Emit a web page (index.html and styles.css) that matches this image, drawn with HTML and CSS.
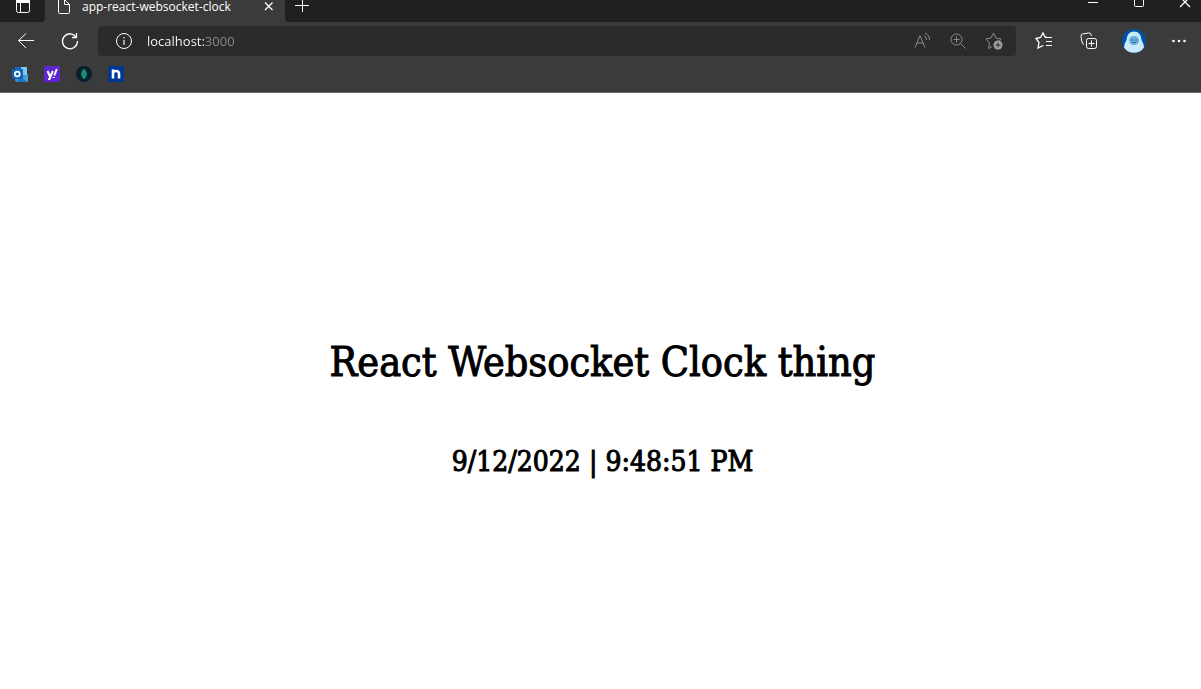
FILE: index.html
```html
<!DOCTYPE html>
<html lang="en">
<head>
<meta charset="utf-8">
<meta name="viewport" content="width=device-width, initial-scale=1">
<title>app-react-websocket-clock</title>
<link rel="stylesheet" href="styles.css">
</head>
<body>
<header class="browser">
  <div class="tabs">
    <button class="tab-menu" aria-label="Tab actions">
      <svg class="icon" width="16" height="16" viewBox="0 0 16 16"><path d="M1.500 0v10.500q0 2 2 2h9q2 0 2-2V0M5.500 3v9"/><path d="M1.500 1.500h13" stroke-width="3"/></svg>
    </button>
    <div class="tab">
      <svg class="icon" width="16" height="16" viewBox="0 0 16 16"><path d="M2.500 0v12.500q0 1 1 1h9q1 0 1-1V4.500L9 0M8.500 0v4.500h5"/></svg>
      <span class="tab-title">app-react-websocket-clock</span>
      <button class="tab-close" aria-label="Close tab">
        <svg class="icon" width="16" height="16" viewBox="0 0 16 16"><path d="M4 3.500l7.500 7.500M11.500 3.500L4 11" stroke-width="1.300"/></svg>
      </button>
    </div>
    <div class="strip">
      <button class="new-tab" aria-label="New tab">
        <svg class="icon" width="16" height="16" viewBox="0 0 16 16"><path d="M1 6.500h14M8.500 0v13"/></svg>
      </button>
      <div class="window-controls">
        <button aria-label="Minimize"><svg class="icon" width="16" height="16" viewBox="0 0 16 16"><path d="M3 6.500h10"/></svg></button>
        <button aria-label="Maximize"><svg class="icon" width="16" height="16" viewBox="0 0 16 16"><rect x="3.500" y="1.500" width="9" height="9" rx="1"/></svg></button>
        <button aria-label="Close"><svg class="icon" width="16" height="16" viewBox="0 0 16 16"><path d="M3 1l10 10M13 1L3 11" stroke-width="1.300"/></svg></button>
      </div>
    </div>
  </div>
  <div class="toolbar">
    <button class="tool" aria-label="Back"><svg class="icon" width="20" height="20" viewBox="0 0 20 20"><path d="M18 9.500H2.500M10 2.500l-7.500 7L10 17"/></svg></button>
    <button class="tool" aria-label="Refresh"><svg class="icon" width="20" height="20" viewBox="0 0 20 20"><path d="M16.500 6.500A7.500 7.500 0 1 0 17.500 10M16.500 2v4.500H12" stroke-width="1.300"/></svg></button>
    <div class="address">
      <button class="info" aria-label="Site information"><svg class="icon" width="18" height="18" viewBox="0 0 18 18"><circle cx="9" cy="9" r="7.500"/><path class="info-mark" d="M9 8v5M9 5v1.500"/></svg></button>
      <input class="url" type="text" aria-label="Address" value="localhost:3000">
      <div class="address-actions">
        <button aria-label="Read aloud"><svg class="icon" width="20" height="20" viewBox="0 0 20 20"><path d="M3 16.500L8 4.500l5 12M5 12h6M12 4.500q2.500 1 2.500 4.500M13 2q4.500 2 4.500 7"/></svg></button>
        <button aria-label="Zoom"><svg class="icon" width="20" height="20" viewBox="0 0 20 20"><circle cx="8.500" cy="8.500" r="5.500"/><path d="M12.500 12.500l5 5M8.500 5.500v6M5.500 8.500h6"/></svg></button>
        <button aria-label="Add to favorites"><svg class="icon" width="20" height="20" viewBox="0 0 20 20"><path d="M8 15.500l-3.500 2 1-5.500-3.500-4 5-1 2.500-5 2.500 5 5 1-2 2.500"/><circle class="plus-disc" cx="14" cy="14" r="4.500"/><path class="plus-mark" d="M11.500 14h5M14 11.500v5"/></svg></button>
      </div>
    </div>
    <div class="tools-end">
      <button class="tool" aria-label="Favorites"><svg class="icon" width="20" height="20" viewBox="0 0 20 20"><path d="M13 6.500l-2-.5-2-4L6.500 6.500 2 7.500l3 4-1 5.500 4-2 1.500-.500" stroke-width="1.300"/><path d="M12 6.500h6M12 10.500h6M12 14.500h6"/></svg></button>
      <button class="tool" aria-label="Collections"><svg class="icon" width="20" height="20" viewBox="0 0 20 20"><path d="M5 13.500q-1.500-.5-2-2.500l-1-5.500q-.5-2 1.500-2.500l6-1q2-.5 2.500 1.500l.5 1.500"/><rect x="7.500" y="7.500" width="10" height="10" rx="2"/><path d="M12.500 9.500v6M9.500 12.500h6"/></svg></button>
      <button class="tool" aria-label="Profile"><svg width="24" height="24" viewBox="0 0 24 24"><circle cx="12" cy="12" r="12" fill="#0050a4"/><path d="M2 18.500Q2 15 4.500 11 5 2.500 12 2.500T19.500 11q2.500 4 2.500 7.500a12 12 0 0 1-20 0z" fill="#c7ebfa"/><ellipse cx="12" cy="11.500" rx="5" ry="4.500" fill="#69aedd"/><circle cx="10" cy="11" r=".8" fill="#185a9d"/><circle cx="14" cy="11" r=".8" fill="#185a9d"/><path d="M10.500 13.500h3" stroke="#185a9d"/></svg></button>
      <button class="tool" aria-label="Settings and more"><svg width="20" height="20" viewBox="0 0 20 20" fill="#fff"><circle cx="4.500" cy="10" r="1.300"/><circle cx="10" cy="10" r="1.300"/><circle cx="15.500" cy="10" r="1.300"/></svg></button>
    </div>
  </div>
  <nav class="bookmarks" aria-label="Bookmarks">
    <a href="#" aria-label="Outlook"><svg width="16" height="16" viewBox="0 0 16 16"><path d="M3 1h12v13H3z" fill="#2f7fce"/><path d="M9 1h6v8H9z" fill="#80c8f2"/><path d="M3 1h6v3H3z" fill="#1769b8"/><path d="M3 14l13-6v8H4z" fill="#4aa0df"/><path d="M8 11l8 5H4z" fill="#2175c6"/><rect y="3" width="11" height="10" rx="1" fill="#1264b5"/><circle cx="5.300" cy="8" r="2.400" fill="none" stroke="#fff" stroke-width="1.700"/></svg></a>
    <a href="#" aria-label="Yahoo"><svg width="16" height="16" viewBox="0 0 16 16"><path d="M0 0h16v16H0z" fill="#5f26cf"/><path d="M3.500 5l2.500 5.500M8.800 5L5.500 13H4M12.800 3l-2.500 6.500M9.700 11v1" fill="none" stroke="#fff" stroke-width="2"/></svg></a>
    <a href="#" aria-label="MongoDB"><svg width="16" height="16" viewBox="0 0 16 16"><circle cx="8" cy="8" r="8" fill="#0b1e30"/><path d="M8 2.500q6 5.500 0 11-6-5.500 0-11z" fill="#168b73"/></svg></a>
    <a href="#" aria-label="Namecheap"><svg width="16" height="16" viewBox="0 0 16 16"><path d="M0 0h16v16H0z" fill="#003791"/><path d="M5 12.500V3.500M5 7q1-2 3-2 3 0 3 2.500v5" fill="none" stroke="#fff" stroke-width="2.600"/></svg></a>
  </nav>
</header>
<main class="page">
  <h1>React Websocket Clock thing</h1>
  <h2>9/12/2022 | 9:48:51 PM</h2>
</main>
</body>
</html>
```
FILE: styles.css
```css
* {
  box-sizing: border-box;
}

body {
  display: flex;
  flex-direction: column;
  min-height: 100vh;
  margin: 0;
  background: #fff;
  color: #000;
  font-family: "Segoe UI", "Open Sans", "Noto Sans", sans-serif;
}

button {
  display: flex;
  align-items: center;
  justify-content: center;
  margin: 0;
  padding: 0;
  border: 0;
  background: none;
  color: inherit;
}

.icon {
  fill: none;
  stroke: currentColor;
  stroke-width: 1;
  flex: none;
}

.browser {
  background: #3b3b3b;
  border-bottom: 1px solid #6b6b6b;
  color: #fff;
}

.tabs {
  display: flex;
  height: 22px;
}

.tab-menu {
  width: 45px;
  align-items: flex-start;
  background: #202020;
  border-radius: 0 0 4px 0;
}

.tab {
  display: flex;
  flex: 0 0 240px;
  gap: 10px;
  padding: 0 8px 0 11px;
}

.tab-title {
  flex: 1;
  font-size: 12px;
  line-height: 14px;
  white-space: nowrap;
}

.tab-close {
  height: 14px;
}

.strip {
  display: flex;
  flex: 1;
  justify-content: space-between;
  align-items: flex-start;
  background: #202020;
  border-radius: 0 0 0 4px;
}

.new-tab {
  width: 34px;
  height: 14px;
}

.window-controls {
  display: flex;
  gap: 30px;
  padding-right: 8px;
}

.window-controls button {
  height: 12px;
}

.window-controls .icon {
  margin-top: -4px;
}

.toolbar {
  display: flex;
  align-items: center;
  height: 38px;
  padding-left: 4px;
}

.tool {
  flex: none;
  width: 44px;
  height: 30px;
}

.address {
  display: flex;
  flex: 1;
  align-items: center;
  height: 30px;
  margin: 0 5px 0 6px;
  padding: 0 12px 0 17px;
  background: #2b2b2b;
  border-radius: 4px;
}

.info-mark {
  stroke: #b0a090;
  stroke-width: 2;
}

.url {
  flex: 1;
  min-width: 0;
  margin: 0 0 0 14px;
  padding: 0;
  border: 0;
  outline: 0;
  background: linear-gradient(90deg, #fff 58px, #8c8c8c 58px);
  -webkit-background-clip: text;
  background-clip: text;
  color: transparent;
  font: 13px/20px "Segoe UI", "Open Sans", "Noto Sans", sans-serif;
}

.address-actions {
  display: flex;
  gap: 16px;
  color: #8c8c8c;
}

.plus-disc {
  fill: #a0a0a0;
  stroke: none;
}

.plus-mark {
  stroke: #2b2b2b;
}

.tools-end {
  display: flex;
}

.tools-end .tool {
  width: 45px;
}

.bookmarks {
  display: flex;
  gap: 16px;
  height: 32px;
  padding: 6px 12px;
}

.bookmarks a {
  display: flex;
  height: 16px;
}

.page {
  display: flex;
  flex: 1;
  flex-direction: column;
  align-items: center;
  justify-content: center;
  padding: 38px 0 0 4px;
  font-family: "Roboto Slab", "DejaVu Serif Condensed", "DejaVu Serif", serif;
  text-align: center;
  -webkit-text-stroke: 1px #000;
}

h1,
h2 {
  margin: 0;
  font-weight: 400;
}

h1 {
  padding-bottom: 52px;
  font-size: 41px;
  line-height: 56px;
}

h2 {
  padding-bottom: 4px;
  font-size: 28px;
  line-height: 40px;
}
```
